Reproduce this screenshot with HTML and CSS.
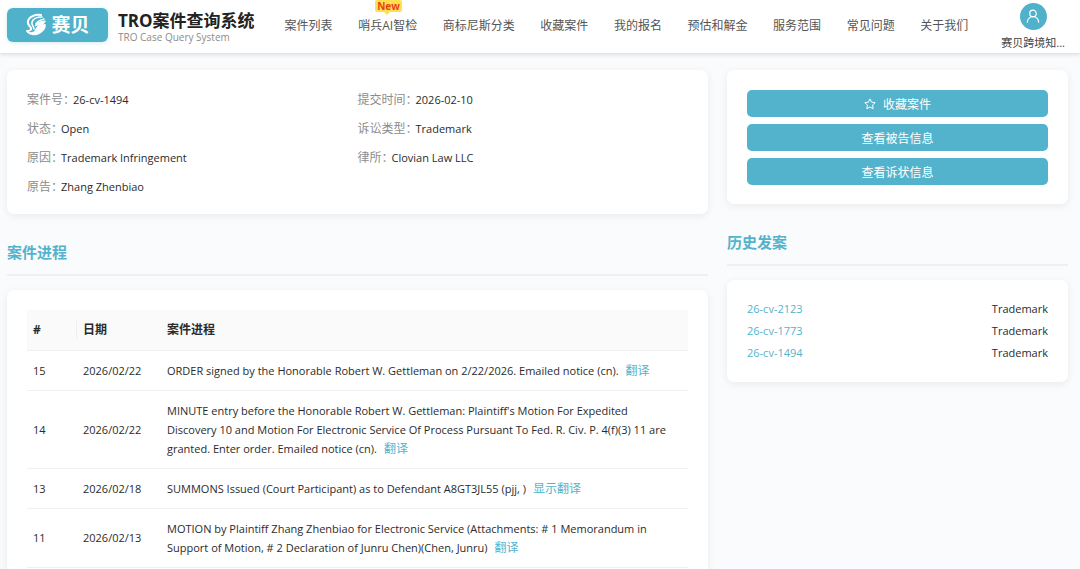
FILE: index.html
```html
<!DOCTYPE html>
<html lang="zh-CN">
<head>
  <meta charset="UTF-8">
  <meta name="viewport" content="width=device-width, initial-scale=1.0">
  <title>TRO案件查询系统</title>
  <link rel="stylesheet" href="styles.css">
</head>
<body>
  <header class="header">
    <a href="#" class="logo">
      <svg class="logo-mark" viewBox="0 0 22 24" fill="none" stroke="#fff" stroke-linecap="round" stroke-linejoin="round" aria-hidden="true">
        <path stroke-width="2" d="M16 2C10 1 4 4 3 8C2 12 5 13 6 15C7 17 4 18 2 18"/>
        <path stroke-width="1.6" d="M17 4C12 4 8 6 7 9C6 12 9 13 9 16"/>
        <path fill="#fff" stroke-width="1" d="M20 8C15 8 12 10 10 13L15 11C13 13 11 15 10 18C8 20 5 20 2 19C5 22 11 23 15 20C19 18 21 14 20 11L17 13Z"/>
        <path stroke-width="1.6" d="M11 11C13 8 15 7 19 6"/>
      </svg>
      <span class="logo-text">赛贝</span>
    </a>
    <div class="brand">
      <h1>TRO案件查询系统</h1>
      <p>TRO Case Query System</p>
    </div>
    <nav class="nav">
      <a href="#">案件列表</a>
      <a href="#" class="has-badge">哨兵AI智检<span class="badge">New</span></a>
      <a href="#">商标尼斯分类</a>
      <a href="#">收藏案件</a>
      <a href="#">我的报名</a>
      <a href="#">预估和解金</a>
      <a href="#">服务范围</a>
      <a href="#">常见问题</a>
      <a href="#">关于我们</a>
    </nav>
    <a href="#" class="user">
      <span class="avatar">
        <svg viewBox="0 0 16 16" width="14" height="14" fill="none" stroke="#fff" stroke-width="1.4" stroke-linecap="round" aria-hidden="true">
          <circle cx="8" cy="5" r="3.7"/>
          <path d="M1.5 15C1.8 11.3 4.5 8.7 8 8.7S14.2 11.3 14.5 15"/>
        </svg>
      </span>
      <span class="user-name">赛贝跨境知...</span>
    </a>
  </header>

  <main class="layout">
    <section class="content">
      <div class="card info">
        <div><span class="label">案件号：</span>26-cv-1494</div>
        <div><span class="label">提交时间：</span>2026-02-10</div>
        <div><span class="label">状态：</span>Open</div>
        <div><span class="label">诉讼类型：</span>Trademark</div>
        <div><span class="label">原因：</span>Trademark Infringement</div>
        <div><span class="label">律所：</span>Clovian Law LLC</div>
        <div><span class="label">原告：</span>Zhang Zhenbiao</div>
      </div>

      <h2 class="title">案件进程</h2>
      <div class="card">
        <table class="table">
          <thead>
            <tr><th class="col-no">#</th><th class="col-date">日期</th><th>案件进程</th></tr>
          </thead>
          <tbody>
            <tr>
              <td>15</td>
              <td>2026/02/22</td>
              <td>ORDER signed by the Honorable Robert W. Gettleman on 2/22/2026. Emailed notice (cn).<a href="#" class="translate">翻译</a></td>
            </tr>
            <tr>
              <td>14</td>
              <td>2026/02/22</td>
              <td>MINUTE entry before the Honorable Robert W. Gettleman: Plaintiff's Motion For Expedited Discovery 10 and Motion For Electronic Service Of Process Pursuant To Fed. R. Civ. P. 4(f)(3) 11 are granted. Enter order. Emailed notice (cn).<a href="#" class="translate">翻译</a></td>
            </tr>
            <tr>
              <td>13</td>
              <td>2026/02/18</td>
              <td>SUMMONS Issued (Court Participant) as to Defendant A8GT3JL55 (pjj, )<a href="#" class="translate">显示翻译</a></td>
            </tr>
            <tr>
              <td>11</td>
              <td>2026/02/13</td>
              <td>MOTION by Plaintiff Zhang Zhenbiao for Electronic Service (Attachments: # 1 Memorandum in Support of Motion, # 2 Declaration of Junru Chen)(Chen, Junru)<a href="#" class="translate">翻译</a></td>
            </tr>
          </tbody>
        </table>
      </div>
    </section>

    <aside class="side">
      <div class="card actions">
        <button type="button" class="btn">
          <svg viewBox="0 0 16 16" width="12" height="12" fill="none" stroke="#fff" stroke-width="1.3" stroke-linejoin="round" aria-hidden="true">
            <path d="M8 1.2L10.1 5.5L14.9 6.2L11.4 9.5L12.2 14.3L8 12L3.800 14.3L4.600 9.5L1.100 6.2L5.900 5.5Z"/>
          </svg>
          收藏案件
        </button>
        <button type="button" class="btn">查看被告信息</button>
        <button type="button" class="btn">查看诉状信息</button>
      </div>

      <h2 class="title">历史发案</h2>
      <ul class="card history">
        <li><a href="#">26-cv-2123</a><span>Trademark</span></li>
        <li><a href="#">26-cv-1773</a><span>Trademark</span></li>
        <li><a href="#">26-cv-1494</a><span>Trademark</span></li>
      </ul>
    </aside>
  </main>
</body>
</html>
```
FILE: styles.css
```css
*{margin:0;padding:0;box-sizing:border-box}
html{overflow:hidden}
body{font-family:'Open Sans','Noto Sans CJK SC',sans-serif;font-size:11px;line-height:19px;background:#f9fbfc;color:#2b2b2b}
a{color:#54b3cc;text-decoration:none}

.header{display:flex;align-items:center;height:53px;padding:0 15px 0 7px;background:#fff;box-shadow:0 1px 5px rgba(0,0,0,.16)}
.logo{display:flex;align-items:center;justify-content:center;gap:4px;width:101px;height:34px;margin-bottom:3px;background:#50b1ca;border-radius:6px;color:#fff;box-shadow:0 1px 4px rgba(80,177,202,.25)}
.logo-mark{width:22px;height:24px}
.logo-text{font-size:19px;line-height:24px;font-weight:700}
.brand{margin-left:10px;white-space:nowrap}
.brand h1{font-size:17px;line-height:20px;color:#222}
.brand p{font-size:10px;line-height:12px;color:#8c8c8c}
.nav{flex:1;display:flex;justify-content:space-between;margin:0 33px 2px 30px;white-space:nowrap}
.nav a{color:#555;font-size:12px}
.has-badge{position:relative}
.badge{position:absolute;top:-16px;left:17px;padding:0 2px;background:#ffe14d;border-radius:2px;color:#e8401c;font-size:10px;line-height:12px;font-weight:700}
.badge::after{content:'';position:absolute;left:9px;top:12px;border:3px solid transparent;border-top-color:#ffe14d;border-bottom:0}
.user{display:flex;flex-direction:column;align-items:center;gap:5px;color:#444}
.avatar{display:flex;align-items:center;justify-content:center;width:27px;height:27px;border-radius:50%;background:#50b1ca}
.user-name{white-space:nowrap;line-height:16px}

.layout{display:flex;align-items:flex-start;gap:19px;padding:17px 12px 0 7px}
.content{flex:1;min-width:0}
.side{width:341px}
.card{padding:20px;background:#fff;border-radius:7px;box-shadow:0 2px 8px rgba(0,0,0,.07)}
.info{display:grid;grid-template-columns:1fr 1fr;row-gap:10px;padding-bottom:18px}
.label{color:#8c8c8c;font-size:12px;margin-right:-2px}
.title{margin:24px 0 14px;padding-bottom:8px;border-bottom:2px solid #eef1f2;color:#54b3cc;font-size:15px;line-height:28px}

.table{width:100%;border-collapse:collapse;text-align:left}
.table th{height:40px;padding:0 6px;background:#fafafa;border-bottom:1px solid #f0f0f0;font-size:12px}
.table td{padding:10px 6px;border-bottom:1px solid #f0f0f0}
.table td:last-child{padding-right:16px}
.table .col-no{width:50px;background:linear-gradient(#eee,#eee) right center/1px 18px no-repeat #fafafa}
.col-date{width:84px}
.translate{margin-left:7px;font-size:12px}

.actions{display:flex;flex-direction:column;gap:7px;padding-bottom:19px}
.btn{display:flex;align-items:center;justify-content:center;gap:7px;height:27px;border:none;border-radius:5px;background:#54b3cc;color:#fff;font-family:inherit;font-size:12px;cursor:pointer}
.btn:hover{background:#449fb8}
.history{padding:18px 20px;list-style:none}
.history li{display:flex;justify-content:space-between;line-height:22px}
```
